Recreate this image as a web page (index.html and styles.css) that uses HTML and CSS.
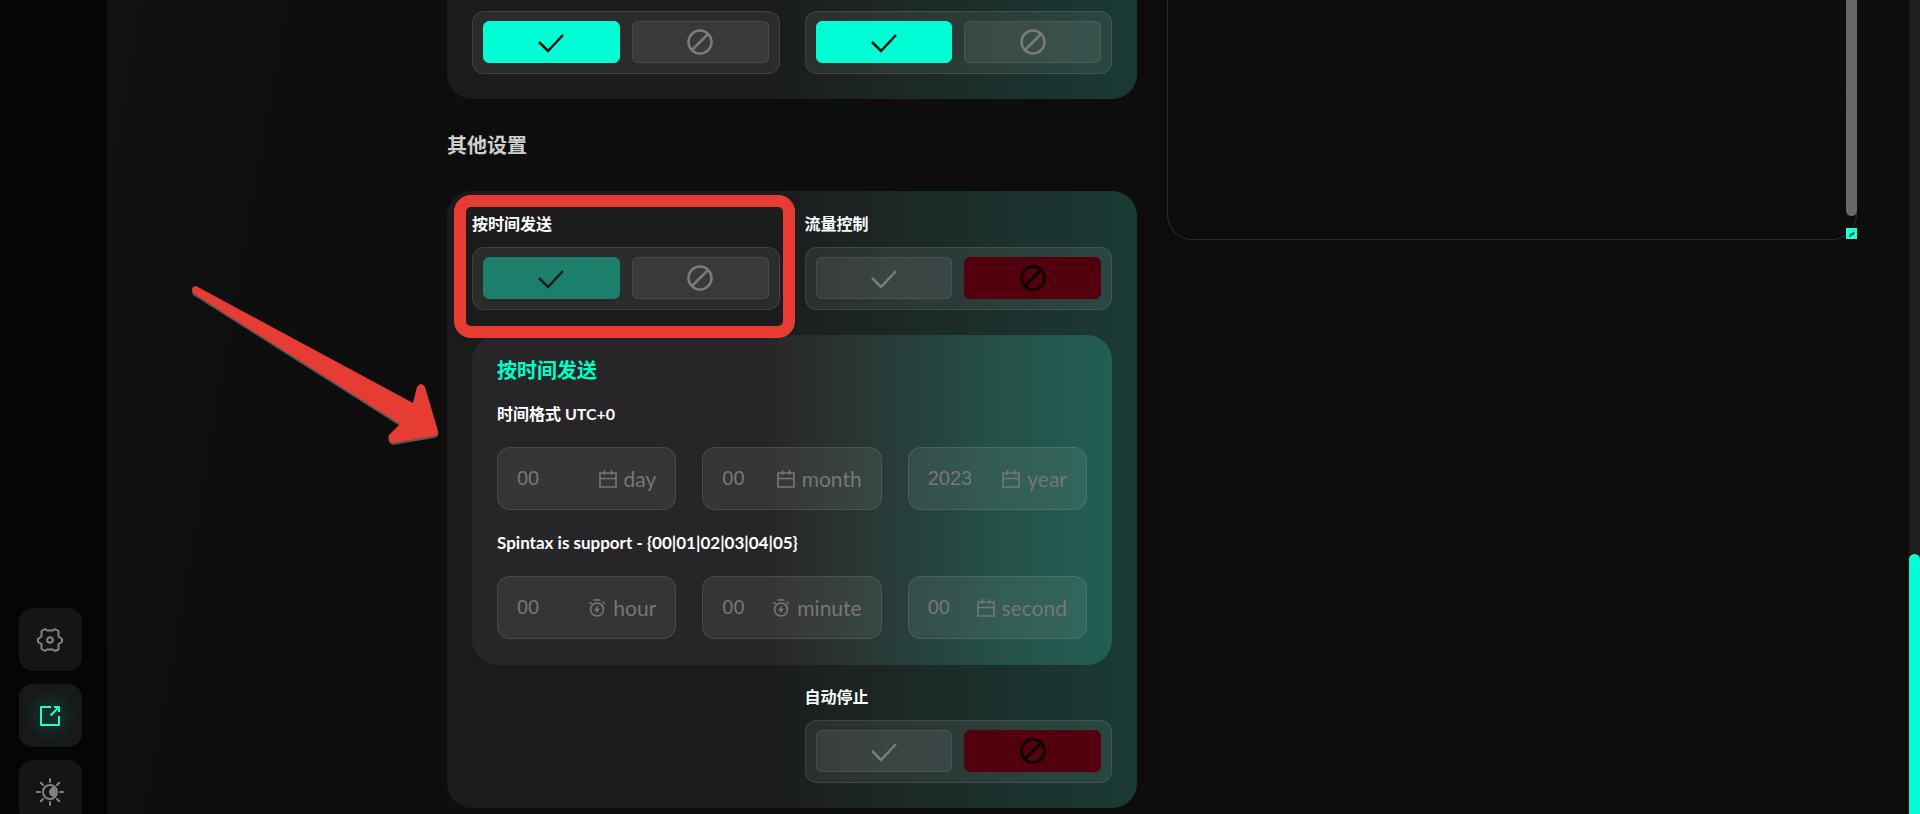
FILE: index.html
```html
<!DOCTYPE html>
<html lang="zh">
<head>
    <meta charset="UTF-8">
    <meta name="viewport" content="width=device-width, initial-scale=1.0">
    <title>其他设置</title>
    <link rel="stylesheet" href="styles.css">
</head>
<body>
    <svg class="sprite" aria-hidden="true">
        <symbol id="check" viewBox="0 0 28 28"><path d="M2 14l9 9L26 7"/></symbol>
        <symbol id="ban" viewBox="0 0 28 28"><circle cx="14" cy="14" r="11.5"/><path d="M6 22L22 6"/></symbol>
        <symbol id="calendar" viewBox="0 0 18 18"><path d="M1 3h16v14H1zM1 8.500h16M5.500 0v5M12.500 0v5"/></symbol>
        <symbol id="timer" viewBox="0 0 18 18"><circle cx="9" cy="10.500" r="6.500"/><path d="M5.500 1h7M1.500 5l2-2M16.500 5l-2-2"/><path class="solid" d="M10 6l-4 5.500h2.500L8 15l4-5.500H9.500z"/></symbol>
    </svg>
    <div class="app">
        <nav class="sidebar">
            <button class="nav-btn" aria-label="Settings">
                <svg viewBox="0 0 26 26"><path d="M8 2l2 1.500h6L18 2l3.500 2v5.500L25 12v3l-3.500 2v5.500L18 24l-2-1.500h-6L8 24l-3.500-2v-5L1 15v-3l3.500-2.500V4z"/><circle cx="13" cy="13" r="2.800"/></svg>
            </button>
            <button class="nav-btn active" aria-label="Send">
                <svg viewBox="0 0 26 26"><path d="M14 4H4v18h18V13M13.500 12.500L22 4M17 4h5v5"/></svg>
            </button>
            <button class="nav-btn" aria-label="Theme">
                <svg class="sun" viewBox="0 0 28 28"><circle cx="14" cy="14" r="7"/><path class="solid" d="M18 9a5 5 0 1 0 0 10a7 7 0 0 0 0-10z"/><path d="M14 1v3M14 24v3M1 14h3M24 14h3M4.800 4.800L7 7M21 21l2.200 2.200M4.800 23.200L7 21M21 7l2.200-2.200"/></svg>
            </button>
        </nav>

        <main class="main">
            <section class="settings">
                <div class="card card-top">
                    <div class="toggle" role="radiogroup" aria-label="Option 1">
                        <label class="option on"><input type="radio" name="t1" aria-label="On" checked><svg><use href="#check"/></svg></label>
                        <label class="option"><input type="radio" name="t1" aria-label="Off"><svg><use href="#ban"/></svg></label>
                    </div>
                    <div class="toggle" role="radiogroup" aria-label="Option 2">
                        <label class="option on"><input type="radio" name="t2" aria-label="On" checked><svg><use href="#check"/></svg></label>
                        <label class="option"><input type="radio" name="t2" aria-label="Off"><svg><use href="#ban"/></svg></label>
                    </div>
                </div>

                <h2 class="heading">其他设置</h2>

                <div class="card card-other">
                    <div class="group">
                        <h3 class="label" id="l-time">按时间发送</h3>
                        <div class="toggle" role="radiogroup" aria-labelledby="l-time">
                            <label class="option on dim"><input type="radio" name="time" aria-label="On" checked><svg><use href="#check"/></svg></label>
                            <label class="option"><input type="radio" name="time" aria-label="Off"><svg><use href="#ban"/></svg></label>
                        </div>
                    </div>
                    <div class="group">
                        <h3 class="label" id="l-flow">流量控制</h3>
                        <div class="toggle" role="radiogroup" aria-labelledby="l-flow">
                            <label class="option"><input type="radio" name="flow" aria-label="On"><svg><use href="#check"/></svg></label>
                            <label class="option off"><input type="radio" name="flow" aria-label="Off" checked><svg><use href="#ban"/></svg></label>
                        </div>
                    </div>

                    <div class="panel">
                        <h3 class="panel-title">按时间发送</h3>
                        <h4 class="label">时间格式 UTC+0</h4>
                        <div class="fields">
                            <label class="field"><input type="text" placeholder="00"><svg><use href="#calendar"/></svg><span>day</span></label>
                            <label class="field"><input type="text" placeholder="00"><svg><use href="#calendar"/></svg><span>month</span></label>
                            <label class="field"><input type="text" placeholder="2023"><svg><use href="#calendar"/></svg><span>year</span></label>
                        </div>
                        <h4 class="label hint">Spintax is support - {00|01|02|03|04|05}</h4>
                        <div class="fields">
                            <label class="field"><input type="text" placeholder="00"><svg><use href="#timer"/></svg><span>hour</span></label>
                            <label class="field"><input type="text" placeholder="00"><svg><use href="#timer"/></svg><span>minute</span></label>
                            <label class="field"><input type="text" placeholder="00"><svg><use href="#calendar"/></svg><span>second</span></label>
                        </div>
                    </div>

                    <div class="group group-right">
                        <h3 class="label" id="l-stop">自动停止</h3>
                        <div class="toggle" role="radiogroup" aria-labelledby="l-stop">
                            <label class="option"><input type="radio" name="stop" aria-label="On"><svg><use href="#check"/></svg></label>
                            <label class="option off"><input type="radio" name="stop" aria-label="Off" checked><svg><use href="#ban"/></svg></label>
                        </div>
                    </div>
                    <div class="highlight"></div>
                </div>
            </section>

            <section class="preview">
                <textarea class="preview-text" aria-label="Preview"></textarea>
                <div class="preview-thumb"></div>
                <svg class="preview-grip" viewBox="0 0 11 11"><path d="M4 9c0-2 1-3 3-3l1-2"/></svg>
            </section>

            <svg class="arrow" viewBox="0 0 250 166">
                <path d="M6 4L223 121L227 105Q231 99 235 105L248 149Q249 153 244 154L203 161Q197 159 199 153L210 142L3 11Q0 5 6 4z"/>
            </svg>
        </main>

        <div class="scrollbar"><div class="scrollbar-thumb"></div></div>
    </div>
</body>
</html>
```
FILE: styles.css
```css
* {
    box-sizing: border-box;
}
body {
    margin: 0;
    background: #0d0d0e;
    color: #fff;
    font-family: Lato, "Noto Sans CJK SC", sans-serif;
    overflow: hidden;
}
h2, h3, h4 {
    margin: 0;
}
svg {
    fill: none;
    stroke: currentColor;
    stroke-width: 2;
}
.sprite {
    display: none;
}
.solid {
    fill: currentColor;
    stroke: none;
}
.app {
    display: flex;
    height: 100vh;
}

/* sidebar */
.sidebar {
    flex: none;
    width: 107px;
    padding-left: 19px;
    margin-bottom: -9px;
    background: #050505;
    display: flex;
    flex-direction: column;
    justify-content: flex-end;
    gap: 13px;
}
.nav-btn {
    flex: none;
    width: 63px;
    height: 63px;
    padding: 0 2px 0 0;
    border: none;
    border-radius: 14px;
    background: #151515;
    color: #838383;
    display: flex;
    align-items: center;
    justify-content: center;
}
.nav-btn svg {
    width: 26px;
    height: 26px;
    stroke-linejoin: round;
}
.nav-btn svg.sun {
    width: 28px;
    height: 28px;
    stroke-linecap: round;
}
.nav-btn.active {
    background: radial-gradient(circle, #123029 15%, #161918 60%);
    color: #1fffcb;
}

/* content */
.main {
    position: relative;
    flex: 1;
    padding: 0 52px 0 340px;
    display: grid;
    grid-template-columns: 1fr 1fr;
    gap: 30px;
    align-items: start;
    background: linear-gradient(100deg, #111 0, #0d0d0e 15%);
}
.card {
    position: relative;
    display: grid;
    grid-template-columns: 1fr 1fr;
    column-gap: 25px;
    padding: 21px 25px 25px;
    border-radius: 25px;
    background: linear-gradient(90deg, #1b1b1c 46%, #1c2624 62%, #1a3933 97%);
}
.card-top {
    padding-top: 11px;
    border-radius: 0 0 25px 25px;
}
.heading {
    margin: 34px 0;
    font-size: 20px;
    line-height: 24px;
    color: #cfcfcf;
}
.label {
    font-size: 16px;
    line-height: 24px;
    font-weight: 700;
}
.hint {
    font-size: 17px;
}
.group .label {
    margin-bottom: 11px;
}
.group-right {
    grid-column: 2;
    margin-top: 20px;
}
.toggle {
    height: 63px;
    padding: 9px 10px;
    border: 1px solid rgba(255, 255, 255, 0.1);
    border-radius: 12px;
    background: rgba(255, 255, 255, 0.07);
    display: flex;
    gap: 12px;
}
.option {
    position: relative;
    flex: 1;
    height: 42px;
    border: 1px solid rgba(255, 255, 255, 0.08);
    border-radius: 6px;
    background: rgba(255, 255, 255, 0.07);
    color: #7b7b7b;
    display: flex;
    align-items: center;
    justify-content: center;
}
.option input {
    position: absolute;
    inset: 0;
    margin: 0;
    opacity: 0;
}
.option svg {
    width: 28px;
    height: 28px;
    stroke-width: 2.5;
}
.option.on {
    background: #00ffd5;
    border-color: #00ffd5;
    color: #06110f;
}
.option.dim {
    background: #1b7f6b;
    border-color: #1b7f6b;
    color: #14201e;
}
.option.off {
    background: #52000d;
    border-color: #52000d;
    color: #050000;
}

/* send by time */
.panel {
    grid-column: 1 / -1;
    margin-top: 25px;
    padding: 23px 25px 26px;
    border-radius: 25px;
    background: linear-gradient(90deg, #272527 46%, #293432 59%, #245048 82%, #225f52 100%);
}
.panel-title {
    margin-bottom: 20px;
    font-size: 20px;
    line-height: 24px;
    color: #00ffc8;
}
.fields {
    display: grid;
    grid-template-columns: repeat(3, minmax(0, 1fr));
    gap: 26px;
    margin-top: 21px;
}
.fields + .label {
    margin-top: 21px;
}
.field {
    height: 63px;
    padding: 0 19px;
    border: 1px solid rgba(255, 255, 255, 0.1);
    border-radius: 13px;
    background: rgba(255, 255, 255, 0.07);
    color: #767777;
    font-size: 21px;
    display: flex;
    align-items: center;
}
.field input {
    flex: 1;
    width: 0;
    min-width: 0;
    padding: 0;
    border: none;
    outline: none;
    background: none;
    color: #fff;
    font: 20px "Liberation Sans", sans-serif;
}
.field input::placeholder {
    color: #767777;
}
.field svg {
    flex: none;
    width: 18px;
    height: 18px;
    margin-right: 7px;
    stroke-width: 1.6;
}

/* preview */
.preview {
    position: relative;
    height: 240px;
}
.preview-text {
    display: block;
    width: 100%;
    height: 100%;
    border: 1px solid #2b2b2c;
    border-top: none;
    border-radius: 0 0 25px 25px;
    background: linear-gradient(#0c0f0b 30%, #0d0d0e 50%);
    resize: none;
    outline: none;
}
.preview-thumb {
    position: absolute;
    top: 0;
    right: 0;
    width: 11px;
    height: 216px;
    border-radius: 0 0 6px 6px;
    background: #68686a;
}
.preview-grip {
    position: absolute;
    right: 0;
    bottom: 1px;
    width: 11px;
    height: 11px;
    background: #1fffd0;
    color: #0a6b5c;
}

/* page scrollbar */
.scrollbar {
    flex: none;
    width: 11px;
    background: #1e1e20;
    display: flex;
    align-items: flex-end;
}
.scrollbar-thumb {
    width: 100%;
    height: 32%;
    border-radius: 6px 6px 0 0;
    background: #00ffd5;
}

/* annotations */
.highlight {
    position: absolute;
    top: 4px;
    left: 7px;
    width: 341px;
    height: 143px;
    border: 12px solid #e63c33;
    border-radius: 17px;
    pointer-events: none;
}
.arrow {
    position: absolute;
    top: 282px;
    left: 83px;
    width: 250px;
    height: 166px;
    fill: #e63c33;
    stroke: none;
    filter: drop-shadow(0 2px 0 #555);
    pointer-events: none;
}
```
